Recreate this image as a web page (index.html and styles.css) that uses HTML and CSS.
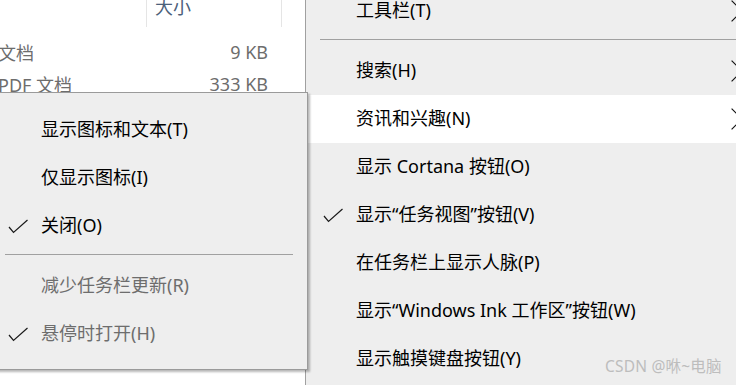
FILE: index.html
```html
<!DOCTYPE html>
<html lang="zh-CN">
<head>
<meta charset="utf-8">
<title>任务栏菜单</title>
<link rel="stylesheet" href="styles.css">
</head>
<body>
<div class="screen">
  <section class="explorer">
    <div class="exp-header">
      <div class="col-type"></div>
      <div class="col-size">大小</div>
    </div>
    <div class="exp-row">
      <span class="cell-type">文档</span>
      <span class="cell-size">9 KB</span>
    </div>
    <div class="exp-row">
      <span class="cell-type">PDF 文档</span>
      <span class="cell-size">333 KB</span>
    </div>
  </section>

  <nav class="menu taskbar-menu">
    <ul class="menu-list shifted">
      <li class="menu-item"><span class="check"></span><span class="label">工具栏(T)</span>
        <svg class="chevron" viewBox="0 0 12 22" width="12" height="22"><polyline points="0.6,0.6 11,11 0.6,21.4"/></svg></li>
      <li class="separator"></li>
      <li class="menu-item"><span class="check"></span><span class="label">搜索(H)</span>
        <svg class="chevron" viewBox="0 0 12 22" width="12" height="22"><polyline points="0.6,0.6 11,11 0.6,21.4"/></svg></li>
      <li class="menu-item active"><span class="check"></span><span class="label">资讯和兴趣(N)</span>
        <svg class="chevron" viewBox="0 0 12 22" width="12" height="22"><polyline points="0.6,0.6 11,11 0.6,21.4"/></svg></li>
      <li class="menu-item"><span class="check"></span><span class="label">显示 Cortana 按钮(O)</span></li>
      <li class="menu-item"><span class="check"><svg viewBox="0 0 20 15" width="20" height="15"><polyline points="1,8 5.5,13.5 19.5,1"/></svg></span><span class="label">显示“任务视图”按钮(V)</span></li>
      <li class="menu-item"><span class="check"></span><span class="label">在任务栏上显示人脉(P)</span></li>
      <li class="menu-item"><span class="check"></span><span class="label">显示“Windows Ink 工作区”按钮(W)</span></li>
      <li class="menu-item"><span class="check"></span><span class="label">显示触摸键盘按钮(Y)</span></li>
    </ul>
  </nav>

  <div class="menu popup">
    <ul class="menu-list">
      <li class="menu-item"><span class="check"></span><span class="label">显示图标和文本(T)</span></li>
      <li class="menu-item"><span class="check"></span><span class="label">仅显示图标(I)</span></li>
      <li class="menu-item"><span class="check"><svg viewBox="0 0 20 15" width="20" height="15"><polyline points="1,8 5.5,13.5 19.5,1"/></svg></span><span class="label">关闭(O)</span></li>
      <li class="separator"></li>
      <li class="menu-item disabled"><span class="check"></span><span class="label">减少任务栏更新(R)</span></li>
      <li class="menu-item disabled"><span class="check"><svg viewBox="0 0 20 15" width="20" height="15"><polyline points="1,8 5.5,13.5 19.5,1"/></svg></span><span class="label">悬停时打开(H)</span></li>
    </ul>
  </div>

  <div class="watermark">CSDN @咻~电脑</div>
</div>
</body>
</html>
```

FILE: styles.css
```css
html, body {
  margin: 0;
  padding: 0;
}

body {
  width: 736px;
  height: 385px;
  overflow: hidden;
  background: #ffffff;
  font-family: "Noto Sans", "Noto Sans CJK SC", sans-serif;
  font-size: 18px;
  color: #000;
}

.screen {
  position: relative;
  display: flex;
  width: 736px;
  height: 385px;
  overflow: hidden;
}

/* ---------- explorer pane ---------- */
.explorer {
  width: 305px;
  flex: none;
  background: #fff;
}

.exp-header {
  display: flex;
  height: 27px;
}

.col-type {
  width: 147px;
  box-sizing: border-box;
  border-right: 1px solid #e5e5e5;
}

.col-size {
  width: 135px;
  box-sizing: border-box;
  border-right: 1px solid #e5e5e5;
  padding-left: 8px;
  line-height: 14px;
  color: #4c607a;
}

.exp-row {
  display: grid;
  grid-template-columns: 147px 134px;
  height: 32px;
  align-items: center;
  color: #6d6d6d;
}

.exp-header + .exp-row {
  margin-top: 10px;
}

.cell-type {
  margin-left: -2px;
  padding-bottom: 2px;
  white-space: nowrap;
}

.cell-size {
  text-align: right;
  padding-right: 13px;
  padding-bottom: 2px;
}

/* ---------- menus ---------- */
.menu {
  background: #eeeeee;
}

.menu-list {
  list-style: none;
  margin: 0;
  padding: 0;
}

.taskbar-menu {
  flex: 1;
  min-width: 0;
  border-left: 1px solid #a0a0a0;
}

.menu-list.shifted {
  margin-top: -13px;
}

.menu-item {
  display: flex;
  align-items: center;
  height: 48px;
  white-space: nowrap;
}

.menu-item.active {
  background: #ffffff;
}

.menu-item.disabled {
  color: #6d6d6d;
}

.check {
  width: 50px;
  flex: none;
  display: flex;
  align-items: center;
}

.check svg {
  margin-left: 17px;
  fill: none;
  stroke: #1a1a1a;
  stroke-width: 1.2;
}

.label {
  flex: none;
  padding-bottom: 4px;
}

.chevron {
  margin-left: auto;
  margin-right: -7px;
  flex: none;
  fill: none;
  stroke: #111;
  stroke-width: 1.2;
}

.separator {
  height: 1px;
  background: #a0a0a0;
  margin: 4px 0 7px 14px;
}

.popup .separator {
  margin: 4px 14px 7px 14px;
}

/* overlay popup menu */
.popup {
  position: absolute;
  left: -10px;
  top: 92px;
  width: 318px;
  box-sizing: border-box;
  border: 1px solid #9a9a9a;
  padding: 13px 0 11px;
  box-shadow: 2px 2px 2px rgba(0, 0, 0, 0.28);
}

.watermark {
  position: absolute;
  left: 605px;
  top: 356px;
  font-family: "Noto Sans", "Noto Sans CJK SC", sans-serif;
  font-size: 15.5px;
  line-height: 20px;
  letter-spacing: 0.2px;
  color: #bdbdbd;
  white-space: nowrap;
}
```
